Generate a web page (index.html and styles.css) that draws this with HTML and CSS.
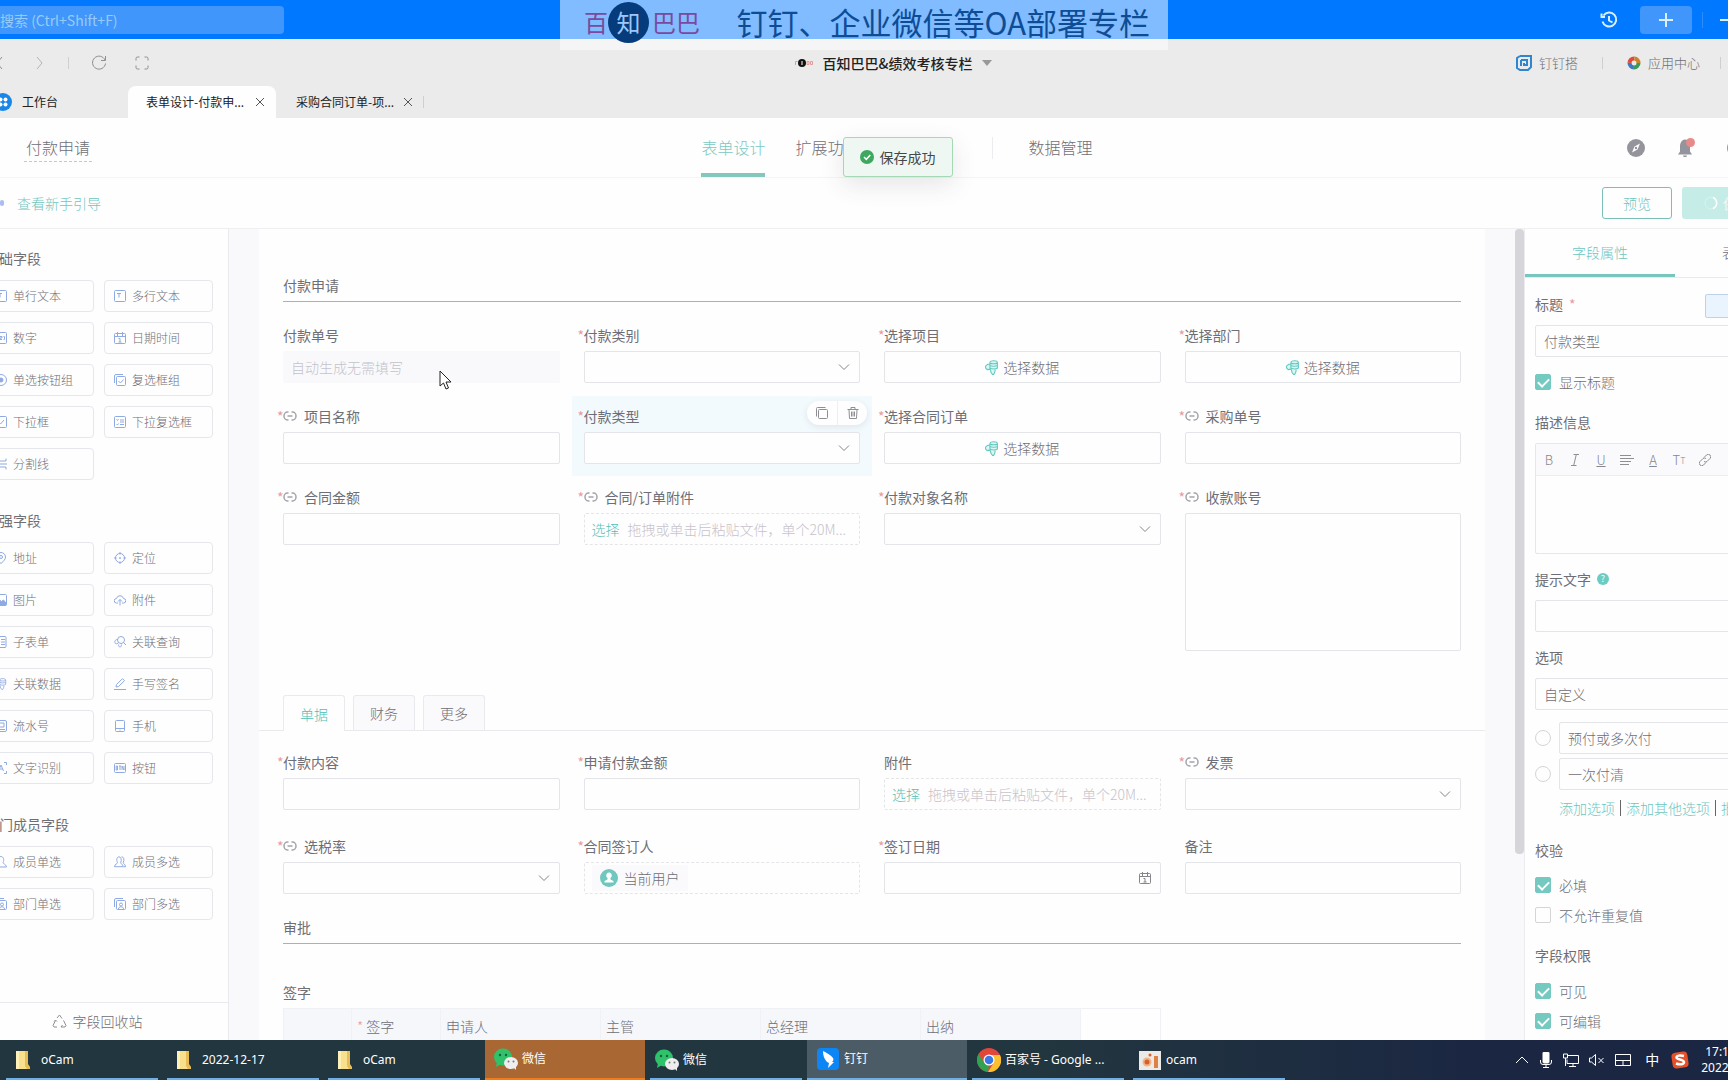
FILE: index.html
```html
<!DOCTYPE html>
<html lang="zh-CN">
<head>
<meta charset="utf-8">
<title>表单设计-付款申请</title>
<link rel="stylesheet" href="styles.css">
</head>
<body>
<svg class="sprite" aria-hidden="true">
  <symbol id="i-link" viewBox="0 0 14 12"><path d="M5.500 2H4.500a3.500 4 0 0 0 0 8h1M8.500 2h1a3.500 4 0 0 1 0 8h-1M4.500 6h5"/></symbol>
  <symbol id="i-down" viewBox="0 0 12 12"><path d="M1 3.500l5 5 5-5"/></symbol>
  <symbol id="i-text" viewBox="0 0 12 12"><rect x=".5" y=".5" width="11" height="11" rx="1"/><path d="M3 3.500h4M5 3.500v4"/></symbol>
  <symbol id="i-num" viewBox="0 0 12 12"><rect x=".5" y=".5" width="11" height="11" rx="1"/><path d="M3 4.500v3M5 4.500h2v1.500H5v1.500h2M8.500 4.500h1v3h-1"/></symbol>
  <symbol id="i-date" viewBox="0 0 12 12"><rect x=".5" y="1.500" width="11" height="10" rx="1"/><path d="M.5 4.500h11M3.500 0v4M8.500 0v4M4.500 6.500H6v3.500M4.500 10h3"/></symbol>
  <symbol id="i-radio" viewBox="0 0 12 12"><circle cx="6" cy="6" r="5.500"/><circle cx="6" cy="6" r="2" class="solid"/></symbol>
  <symbol id="i-checks" viewBox="0 0 12 12"><rect x="2.500" y="2.500" width="9" height="9" rx="1"/><path d="M.5 9V2A1.500 1.500 0 0 1 2 .5h7M4.500 7l2 2 3-3.500"/></symbol>
  <symbol id="i-check" viewBox="0 0 12 12"><rect x=".5" y=".5" width="11" height="11" rx="1"/><path d="M3 5.500l2.500 2.500L9 4"/></symbol>
  <symbol id="i-list" viewBox="0 0 12 12"><rect x=".5" y=".5" width="11" height="11" rx="1"/><path d="M2.500 3.500l1 1 1-1.500M2.500 8l1 1 1-1.500M6 4h4M6 6h4M6 8.500h4"/></symbol>
  <symbol id="i-split" viewBox="0 0 12 12"><path d="M0 6h2M3.500 6H12M2 .5V3h9V.5M2 11.500V9h9v2.500"/></symbol>
  <symbol id="i-pin" viewBox="0 0 12 12"><path d="M6 11.500C3 9 1.500 7 1.500 5a4.500 4.500 0 0 1 9 0c0 2-1.500 4-4.500 6.500z"/><circle cx="6" cy="5" r="1.500"/></symbol>
  <symbol id="i-aim" viewBox="0 0 12 12"><circle cx="6" cy="6" r="4.500"/><path d="M6 0v2.500M6 9.500V12M0 6h2.500M9.500 6H12"/><circle cx="6" cy="6" r=".5" class="solid"/></symbol>
  <symbol id="i-image" viewBox="0 0 12 12"><rect x=".5" y=".5" width="11" height="11" rx="1"/><path class="solid" d="M1 11V8.500l3-3 2.500 2 2-1.500L11 9v2z"/></symbol>
  <symbol id="i-cloud" viewBox="0 0 12 12"><path d="M4 9H2.500A2.200 2.200 0 0 1 2.500 4.500 3.600 3.600 0 0 1 9.500 4.500 2.200 2.200 0 0 1 9.500 9H8M6 11.500V5.500M4 7.500l2-2 2 2"/></symbol>
  <symbol id="i-sub" viewBox="0 0 12 12"><rect x="1.500" y=".5" width="9.500" height="11" rx="1"/><path d="M4.500.5v11M6 3.500h4M6 6h4M6 8.500h4"/></symbol>
  <symbol id="i-query" viewBox="0 0 12 12"><circle cx="7" cy="4" r="3.500"/><path d="M9.500 6.500L12 9M3.500 3.500C1 3.500 0 6 1.500 7.500c1 .8 2.500 0 3-1M4.500 8.500c0 1.500.5 2.500 1.500 2.500s1.500-1 1.500-2.500"/></symbol>
  <symbol id="i-data" viewBox="0 0 12 14"><path d="M4.500 2.500c0-2.400 7-2.400 7 0v5c-1.500 1.200-5.500 1.200-7 0zM4.500 5c1.500 1 5.500 1 7 0M4.500 2.800c1.500 1 5.500 1 7 0M4.500 4H2.500L.5 5.500v2l1.500 1.500 3-.5M5 9l.5 2.500L7 13.500h1l1-2L9.500 9"/></symbol>
  <symbol id="i-pen" viewBox="0 0 12 12"><path d="M0 11.500h12M2 9l.5-2.500L8.500.7l2 2L4.500 8.500z"/></symbol>
  <symbol id="i-serial" viewBox="0 0 12 12"><rect x=".5" y=".5" width="11" height="11" rx="1.500"/><path d="M4 3h5v4H4zM3 9.500h7"/></symbol>
  <symbol id="i-phone" viewBox="0 0 12 12"><rect x="1.500" y=".5" width="9" height="11" rx="1"/><path d="M1.500 8.500h9M5.500 10h1"/></symbol>
  <symbol id="i-ocr" viewBox="0 0 12 12"><path d="M.5 3V.5H3M9 .5h2.500V3M.5 9v2.500H3M9 11.500h2.500V9M3.500 9L6 3l2.500 6M4.500 7h3"/></symbol>
  <symbol id="i-btn" viewBox="0 0 12 12"><rect x=".5" y="1.500" width="11" height="9" rx="1"/><path d="M2.200 4v4h1.300V4zM5 4h2M6 4v4M8 8V4l2 4V4"/></symbol>
  <symbol id="i-user" viewBox="0 0 12 12"><path d="M4 6.500C2.500 4 3.500.5 6 .5s3.500 3.500 2 6c0 1.500 3 1.500 3.500 4.500H.5C1 8 4 8 4 6.500z"/></symbol>
  <symbol id="i-users" viewBox="0 0 12 12"><path d="M3.500 6.500C2 4 3 .8 5 .8s3 3.200 1.700 5.700c0 1.500 2 1.500 2.500 4.200H.3C.8 8 3.500 8 3.500 6.500zM7.500.8c2.500 0 3 3 1.700 5.700 0 1.500 2 1.500 2.500 4.200H9.500"/></symbol>
  <symbol id="i-dept" viewBox="0 0 12 12"><rect x="2.500" y="2.500" width="9" height="9" rx="1"/><path d="M.5 9V2A1.500 1.500 0 0 1 2 .5h7M4.500 11c0-3 5-3 5 0"/><circle cx="7" cy="6.500" r="1.500"/></symbol>
  <symbol id="i-folder" viewBox="0 0 14 20"><path fill="#f8e08c" d="M0 1h11v15l3 1v2H0z"/><path fill="#e9bd55" d="M9 1h3v13l2 3v2h-3L9 16z"/><path fill="#fdf0b8" d="M0 1h3v18H0z"/></symbol>
  <symbol id="i-wechat" viewBox="0 0 24 22"><ellipse cx="9" cy="9" rx="9" ry="8.500" fill="#2fc26a"/><path fill="#2fc26a" d="M3 14l-1 5 5-3z"/><circle cx="6" cy="7" r="1.200" fill="#17603a"/><circle cx="12" cy="7" r="1.200" fill="#17603a"/><ellipse cx="17" cy="15" rx="7" ry="6" fill="#eee"/><path fill="#eee" d="M19 19l3 3v-4z"/><circle cx="14.500" cy="13.500" r="1" fill="#777"/><circle cx="19.500" cy="13.500" r="1" fill="#777"/></symbol>
</svg>

<header class="topbar">
  <input class="search" type="text" aria-label="搜索" placeholder="搜索 (Ctrl+Shift+F)">
  <div class="top-actions">
    <button class="plain" aria-label="历史"><svg width="18" height="18" viewBox="0 0 18 18" class="ico-light"><path d="M3.500 4.500a7 7 0 1 1-1 6M1.500 2.500v3.500H5M9 5v4.500l3.500 2"/></svg></button>
    <button class="plus" aria-label="新建"><svg width="14" height="14" viewBox="0 0 14 14" class="ico-light"><path d="M7 0v14M0 7h14"/></svg></button>
    <i class="sep light"></i>
    <button class="plain" aria-label="最小化"><svg width="14" height="14" viewBox="0 0 14 14" class="ico-light"><path d="M0 7h14"/></svg></button>
  </div>
</header>
<div class="banner">
  <span class="brand">百</span><span class="brand-dot">知</span><span class="brand">巴巴</span>
  <span class="banner-title">钉钉、企业微信等OA部署专栏</span>
</div>

<div class="toolbar">
  <div class="nav-left">
    <button class="plain" aria-label="后退"><svg width="14" height="14" viewBox="0 0 14 14" class="ico-grey"><path d="M12 1L7 7l5 6"/></svg></button>
    <button class="plain" aria-label="前进"><svg width="14" height="14" viewBox="0 0 14 14" class="ico-dim"><path d="M5 1l5 6-5 6"/></svg></button>
    <i class="sep"></i>
    <button class="plain" aria-label="刷新"><svg width="16" height="16" viewBox="0 0 16 16" class="ico-grey"><path d="M14 5A6.500 6.500 0 1 0 14.500 8.500M14.500 1v4.500H10"/></svg></button>
    <button class="plain" aria-label="全屏"><svg width="14" height="14" viewBox="0 0 14 14" class="ico-grey"><path d="M1 4.500V2.500Q1 1 2.500 1h2M9.500 1h2Q13 1 13 2.500v2M13 9.500v2q0 1.500-1.500 1.500h-2M4.500 13h-2Q1 13 1 11.500v-2"/></svg></button>
  </div>
  <button class="org">
    <svg width="19" height="10" viewBox="0 0 19 10"><circle cx="8" cy="5" r="4" fill="#111"/><path d="M8 3v4" stroke="#fff"/><path d="M1.500 7V3.500h2M13 3.500h2v3h-2zM16.500 3.500h2v3h-2z" fill="none" stroke="#e39a9a"/></svg>
    <b>百知巴巴&amp;绩效考核专栏</b>
    <svg width="10" height="6" viewBox="0 0 10 6"><path d="M0 0h10L5 6z" fill="#999"/></svg>
  </button>
  <div class="nav-right">
    <a href="#"><svg width="16" height="16" viewBox="0 0 16 16" fill="none" stroke="#2f86cf" stroke-width="2"><path d="M4 1h11v11l-3 3H4l-3-2V3l3-2M5 5h6v5H8V8M5 5v6"/></svg>钉钉搭</a>
    <i class="sep"></i>
    <a href="#"><svg width="14" height="14" viewBox="0 0 14 14" fill="none" stroke-width="4"><circle cx="7" cy="7" r="4.500" stroke="#3b9a5b" stroke-dasharray="7 22"/><circle cx="7" cy="7" r="4.500" stroke="#3d78c9" stroke-dasharray="0 7 7 22"/><circle cx="7" cy="7" r="4.500" stroke="#d94f3d" stroke-dasharray="0 14 7 22"/><circle cx="7" cy="7" r="4.500" stroke="#c9852d" stroke-dasharray="0 21 8 22"/></svg>应用中心</a>
    <i class="sep"></i>
  </div>
</div>

<nav class="tabs">
  <a class="home" href="#"><svg width="18" height="18" viewBox="0 0 18 18"><circle cx="9" cy="9" r="9" fill="#1a86e8"/><g fill="#fff"><circle cx="6.500" cy="6.500" r="2"/><circle cx="11.500" cy="6.500" r="2"/><circle cx="6.500" cy="11.500" r="2"/><circle cx="11.500" cy="11.500" r="2"/></g></svg>工作台</a>
  <div class="tab active"><a href="#">表单设计-付款申...</a><button class="plain" aria-label="关闭"><svg width="10" height="10" viewBox="0 0 10 10" class="ico-dark"><path d="M1 1l8 8M9 1L1 9"/></svg></button></div>
  <div class="tab"><a href="#">采购合同订单-项...</a><button class="plain" aria-label="关闭"><svg width="10" height="10" viewBox="0 0 10 10" class="ico-dark"><path d="M1 1l8 8M9 1L1 9"/></svg></button></div>
  <i class="sep"></i>
</nav>

<div class="app">
  <header class="app-head">
    <h1>付款申请</h1>
    <nav class="steps">
      <a class="on" href="#">表单设计</a>
      <a href="#">扩展功能</a>
      <i class="sep"></i>
      <a href="#">数据管理</a>
    </nav>
    <div class="head-icons">
      <svg width="18" height="18" viewBox="0 0 18 18"><circle cx="9" cy="9" r="9" fill="#94949c"/><path fill="#fff" d="M13 4.500l-2.500 6-5.500 3 2.500-6z"/><circle cx="9" cy="9" r="1.200" fill="#94949c"/></svg>
      <svg width="18" height="20" viewBox="0 0 18 20"><path fill="#94949c" d="M8 1.500C4.500 2 3 5 3 8.500v5L1 16.500h14l-2-3v-5C13 5 11.500 2 8 1.500zM6 17.500h4c0 2-4 2-4 0z"/><circle cx="13.500" cy="4.500" r="4.500" fill="#e88a8a"/></svg>
      <svg width="18" height="18" viewBox="0 0 18 18"><circle cx="9" cy="9" r="9" fill="#94949c"/></svg>
    </div>
    <div class="toast" role="status"><svg width="14" height="14" viewBox="0 0 14 14"><circle cx="7" cy="7" r="7" fill="#3ea85f"/><path d="M4 7l2.300 2.300L10.300 5" fill="none" stroke="#fff" stroke-width="1.500"/></svg>保存成功</div>
  </header>

  <div class="sub-head">
    <a class="guide" href="#"><i></i>查看新手引导</a>
    <button class="preview">预览</button>
    <button class="save"><svg width="14" height="14" viewBox="0 0 14 14" fill="none"><circle cx="7" cy="7" r="6" stroke="#d8f3f0"/><path d="M9 1.500a6 6 0 0 1 0 11" stroke="#fff" stroke-width="1.500"/></svg>保存</button>
  </div>

  <div class="work">
    <aside class="palette">
      <div class="groups">
        <h2>基础字段</h2>
        <div class="grid2">
          <button><svg><use href="#i-text"/></svg>单行文本</button>
          <button><svg><use href="#i-text"/></svg>多行文本</button>
          <button><svg><use href="#i-num"/></svg>数字</button>
          <button><svg><use href="#i-date"/></svg>日期时间</button>
          <button><svg><use href="#i-radio"/></svg>单选按钮组</button>
          <button><svg><use href="#i-checks"/></svg>复选框组</button>
          <button><svg><use href="#i-check"/></svg>下拉框</button>
          <button><svg><use href="#i-list"/></svg>下拉复选框</button>
          <button><svg><use href="#i-split"/></svg>分割线</button>
        </div>
        <h2>增强字段</h2>
        <div class="grid2">
          <button><svg><use href="#i-pin"/></svg>地址</button>
          <button><svg><use href="#i-aim"/></svg>定位</button>
          <button><svg><use href="#i-image"/></svg>图片</button>
          <button><svg><use href="#i-cloud"/></svg>附件</button>
          <button><svg><use href="#i-sub"/></svg>子表单</button>
          <button><svg><use href="#i-query"/></svg>关联查询</button>
          <button><svg><use href="#i-data"/></svg>关联数据</button>
          <button><svg><use href="#i-pen"/></svg>手写签名</button>
          <button><svg><use href="#i-serial"/></svg>流水号</button>
          <button><svg><use href="#i-phone"/></svg>手机</button>
          <button><svg><use href="#i-ocr"/></svg>文字识别</button>
          <button><svg><use href="#i-btn"/></svg>按钮</button>
        </div>
        <h2>部门成员字段</h2>
        <div class="grid2">
          <button><svg><use href="#i-user"/></svg>成员单选</button>
          <button><svg><use href="#i-users"/></svg>成员多选</button>
          <button><svg><use href="#i-dept"/></svg>部门单选</button>
          <button><svg><use href="#i-dept"/></svg>部门多选</button>
        </div>
      </div>
      <button class="recycle"><svg width="15" height="14" viewBox="0 0 15 14" class="ico-grey"><path d="M5 4L7.500 1 10 4.500M3.500 6.500L1 11.500l1 1.500h3M11.500 6.500l2.500 5-1 1.500H9M10.500 11L9 13M2 7.500l1.500-1.500 1.500 1.500"/></svg>字段回收站</button>
    </aside>

    <main class="canvas">
      <div class="sheet">
        <h2 class="section">付款申请</h2>
        <div class="fields">
          <div class="field"><label for="f1">付款单号</label><input id="f1" class="off" placeholder="自动生成无需填写" disabled></div>
          <div class="field"><label for="f2"><em>*</em>付款类别</label><span class="drop"><select id="f2"><option></option></select><svg><use href="#i-down"/></svg></span></div>
          <div class="field"><span class="label"><em>*</em>选择项目</span><button class="pick"><svg><use href="#i-data"/></svg>选择数据</button></div>
          <div class="field"><span class="label"><em>*</em>选择部门</span><button class="pick"><svg><use href="#i-data"/></svg>选择数据</button></div>
          <div class="field"><label for="f3"><em>*</em><svg><use href="#i-link"/></svg>项目名称</label><input id="f3"></div>
          <div class="field chosen"><label for="f4"><em>*</em>付款类型</label><span class="drop"><select id="f4"><option></option></select><svg><use href="#i-down"/></svg></span>
            <div class="ops"><button aria-label="复制"><svg width="12" height="12" viewBox="0 0 12 12" class="ico-grey"><rect x="2.500" y="2.500" width="9" height="9" rx="1"/><path d="M.5 9.500V1.500q0-1 1-1h8"/></svg></button><button aria-label="删除"><svg width="12" height="12" viewBox="0 0 12 12" class="ico-grey"><path d="M.5 2.500h11M4 2.500v-2h4v2M2 2.500l.5 9h7l.5-9M4.500 4.500v5M6 4.500v5M7.500 4.500v5"/></svg></button></div>
          </div>
          <div class="field"><span class="label"><em>*</em>选择合同订单</span><button class="pick"><svg><use href="#i-data"/></svg>选择数据</button></div>
          <div class="field"><label for="f5"><em>*</em><svg><use href="#i-link"/></svg>采购单号</label><input id="f5"></div>
          <div class="field"><label for="f6"><em>*</em><svg><use href="#i-link"/></svg>合同金额</label><input id="f6"></div>
          <div class="field"><span class="label"><em>*</em><svg><use href="#i-link"/></svg>合同/订单附件</span><div class="upload"><a href="#">选择</a><span>拖拽或单击后粘贴文件，单个20M...</span></div></div>
          <div class="field"><label for="f7"><em>*</em>付款对象名称</label><span class="drop"><select id="f7"><option></option></select><svg><use href="#i-down"/></svg></span></div>
          <div class="field"><label for="f8"><em>*</em><svg><use href="#i-link"/></svg>收款账号</label><textarea id="f8"></textarea></div>
        </div>
        <div class="sheet-tabs"><button class="on">单据</button><button>财务</button><button>更多</button></div>
        <div class="fields second">
          <div class="field"><label for="g1"><em>*</em>付款内容</label><input id="g1"></div>
          <div class="field"><label for="g2"><em>*</em>申请付款金额</label><input id="g2"></div>
          <div class="field"><span class="label">附件</span><div class="upload"><a href="#">选择</a><span>拖拽或单击后粘贴文件，单个20M...</span></div></div>
          <div class="field"><label for="g3"><em>*</em><svg><use href="#i-link"/></svg>发票</label><span class="drop"><select id="g3"><option></option></select><svg><use href="#i-down"/></svg></span></div>
          <div class="field"><label for="g4"><em>*</em><svg><use href="#i-link"/></svg>选税率</label><span class="drop"><select id="g4"><option></option></select><svg><use href="#i-down"/></svg></span></div>
          <div class="field"><span class="label"><em>*</em>合同签订人</span><div class="upload"><span class="chip"><svg width="18" height="18" viewBox="0 0 18 18"><circle cx="9" cy="9" r="9" fill="#6fc7be"/><path fill="#fff" d="M9 3.500a3 3 0 0 1 1.500 5.500v1.500l3 1.500v1.500h-9V12l3-1.500V9A3 3 0 0 1 9 3.500z"/></svg>当前用户</span></div></div>
          <div class="field"><label for="g5"><em>*</em>签订日期</label><span class="drop"><input id="g5"><svg><use href="#i-date"/></svg></span></div>
          <div class="field"><label for="g6">备注</label><input id="g6"></div>
        </div>
        <h2 class="section approve">审批</h2>
        <h3>签字</h3>
        <table class="sign">
          <thead><tr><th class="c-idx"></th><th class="c-sign"><em>*</em> 签字</th><th class="c-role">申请人</th><th class="c-role">主管</th><th class="c-role">总经理</th><th class="c-role">出纳</th><th class="c-rest"></th></tr></thead>
          <tbody><tr><td></td><td></td><td></td><td></td><td></td><td></td><td></td></tr></tbody>
        </table>
      </div>
      <div class="thumb"></div>
    </main>

    <aside class="props">
      <div class="prop-tabs"><button class="on">字段属性</button><button>表单属性</button></div>
      <div class="prop-body">
        <div class="title-row"><label for="p1">标题<em>*</em></label><button class="linkage" aria-label="标题设置"></button></div>
        <input id="p1" value="付款类型">
        <label class="tick"><input type="checkbox" checked>显示标题</label>
        <h4 class="h-desc">描述信息</h4>
        <div class="editor">
          <div class="ed-bar">
            <button aria-label="加粗">B</button><button aria-label="斜体"><svg width="10" height="12" viewBox="0 0 10 12" class="ico-grey"><path d="M3.500 .5H9M1 11.500h5.500M6.300 .5L3.700 11.500"/></svg></button><button aria-label="下划线"><u>U</u></button>
            <button aria-label="对齐"><svg width="14" height="10" viewBox="0 0 14 10" class="ico-grey"><path d="M0 .5h11M0 3.500h14M0 6.500h11M0 9.500h9"/></svg></button>
            <button aria-label="颜色"><u>A</u></button><button aria-label="字号">T<small>T</small></button>
            <button aria-label="链接"><svg width="12" height="12" viewBox="0 0 12 12" class="ico-grey"><path d="M5 3.500L7.500 1a2.300 2.300 0 0 1 3.500 3.500L8 7.500q-1.500 1-3 0M7 8.500L4.500 11A2.300 2.300 0 0 1 1 7.500L4 4.500q1.500-1 3 0"/></svg></button>
            <button aria-label="清除">a</button>
          </div>
          <textarea aria-label="描述信息"></textarea>
        </div>
        <h4 class="h-tip"><label for="p2">提示文字</label><span class="help">?</span></h4>
        <input id="p2">
        <h4 class="h-opt"><label for="p3">选项</label></h4>
        <input id="p3" value="自定义">
        <div class="opts">
          <input type="radio" name="o" aria-label="预付或多次付"><input aria-label="选项一" value="预付或多次付">
          <input type="radio" name="o" aria-label="一次付清"><input aria-label="选项二" value="一次付清">
        </div>
        <div class="opt-links"><a href="#">添加选项</a><i></i><a href="#">添加其他选项</a><i></i><a href="#">批量编辑</a></div>
        <h4 class="h-check">校验</h4>
        <label class="tick"><input type="checkbox" checked>必填</label>
        <label class="tick"><input type="checkbox">不允许重复值</label>
        <h4 class="h-perm">字段权限</h4>
        <label class="tick"><input type="checkbox" checked>可见</label>
        <label class="tick"><input type="checkbox" checked>可编辑</label>
      </div>
    </aside>
  </div>
</div>

<footer class="taskbar">
  <button><svg class="fold"><use href="#i-folder"/></svg>oCam</button>
  <button><svg class="fold"><use href="#i-folder"/></svg>2022-12-17</button>
  <button><svg class="fold"><use href="#i-folder"/></svg>oCam</button>
  <button class="alert"><svg class="app-ico"><use href="#i-wechat"/></svg>微信</button>
  <button><svg class="app-ico"><use href="#i-wechat"/></svg>微信</button>
  <button class="cur"><svg class="app-ico" viewBox="0 0 24 24"><rect x="1" y="1" width="22" height="22" rx="4" fill="#0c86f5"/><path fill="#fff" d="M7 4c4 2 8 4 10 7 1 2 0 3-1 4h2l-6 6 1-5-2-1c-3-3-4-7-4-11z"/></svg>钉钉</button>
  <button><svg class="app-ico" viewBox="0 0 24 24"><circle cx="12" cy="12" r="12" fill="#e1463a"/><path fill="#2fa350" d="M1.600 6L7.500 15.500 12 17l-1 7A12 12 0 0 1 1.600 6z"/><path fill="#fbc02f" d="M12 7h11a12 12 0 0 1-12 17l5-8z"/><circle cx="12" cy="12" r="5.500" fill="#fff"/><circle cx="12" cy="12" r="4.300" fill="#3b78e7"/></svg>百家号 - Google ...</button>
  <button><svg class="app-ico" viewBox="0 0 24 24"><rect x="1" y="3" width="22" height="19" fill="#eceae6"/><circle cx="9" cy="14" r="4.500" fill="#f0b48a"/><circle cx="9" cy="14" r="2.500" fill="#d2622a"/><circle cx="12" cy="7" r="1.500" fill="#d2622a"/><path fill="#dd8146" d="M16 8h4v12h-4z"/></svg>ocam</button>
  <div class="tray">
    <svg width="14" height="14" viewBox="0 0 14 14"><path d="M1 10l6-6 6 6"/></svg>
    <svg width="14" height="16" viewBox="0 0 14 16"><rect x="4" y="0" width="6" height="11" rx="1" fill="#fff"/><path d="M1.500 8v2q0 2.500 2.500 2.500h6q2.500 0 2.500-2.500V8M7 13v2.500M4 15.500h6"/></svg>
    <svg width="16" height="14" viewBox="0 0 16 14"><path d="M5 2.500h10.500v8H4v-4M10 10.500v3M6 13.500h7M.5 1h4v4h-4zM2.500 5v8"/></svg>
    <svg width="16" height="14" viewBox="0 0 16 14"><path d="M.5 5h2l4-3.500v11L2.500 9h-2zM9.500 5l5 5M14.500 5l-5 5"/></svg>
    <svg width="16" height="14" viewBox="0 0 16 14"><path d="M.5 1.500h15v11H.5zM.5 7.500h15M8 7.500v5"/></svg>
    <span class="ime">中</span>
    <svg width="18" height="18" viewBox="0 0 18 18"><rect x="1" y="1" width="16" height="16" rx="4" fill="#e4502a" stroke="none" transform="rotate(-8 9 9)"/><path d="M13 5C9 4 5.500 4.500 5.500 6.500S13 8.500 13 11s-4 3-8 1.500" stroke-width="2.500"/></svg>
    <time><span>17:17</span><span>2022/12/17</span></time>
  </div>
</footer>

<svg class="pointer" width="13" height="20" viewBox="0 0 13 20"><path d="M1 1v15l3.500-3 2.500 6 2.500-1L7 12h5z" fill="#fff" stroke="#222"/></svg>
</body>
</html>
```
FILE: styles.css
```css
* { box-sizing: border-box; }

body {
  margin: 0;
  height: 100vh;
  display: flex;
  flex-direction: column;
  overflow: hidden;
  position: relative;
  background: #fefefe;
  color: #6e6e76;
  font: 300 14px/20px "Noto Sans CJK SC", sans-serif;
}

button, input, select, textarea { font: inherit; color: inherit; }
button { padding: 0; background: none; border: 0; white-space: nowrap; }
a { color: inherit; text-decoration: none; }
h1, h2, h3, h4 { margin: 0; font-weight: 400; font-size: 14px; }
em { font-style: normal; color: #e89a9f; }
svg { flex: none; }
.sprite { position: absolute; width: 0; height: 0; }
.solid { fill: currentColor; }

.ico-light { fill: none; stroke: #d8f0ff; stroke-width: 2; }
.ico-grey { fill: none; stroke: #8e8e94; }
.ico-dim { fill: none; stroke: #b4b4b8; }
.ico-dark { fill: none; stroke: #555; }
.plain { display: flex; align-items: center; justify-content: center; }
.sep { width: 1px; height: 12px; background: #cfcfcf; }

/* Window title bar */
.topbar {
  flex: none;
  height: 39px;
  display: flex;
  justify-content: space-between;
  align-items: center;
  background: #0078ff;
}
.search {
  width: 290px;
  height: 28px;
  margin-left: -6px;
  padding: 0 6px;
  border: 0;
  border-radius: 4px;
  background: #4196fb;
  font-weight: 400;
}
.search::placeholder { color: #96cbf8; }
.top-actions { display: flex; align-items: center; margin-right: -6px; }
.plus {
  width: 52px;
  height: 28px;
  margin: 0 10px 0 22px;
  border-radius: 4px;
  background: #4196fb;
  display: flex;
  align-items: center;
  justify-content: center;
}
.sep.light { height: 16px; margin-right: 17px; background: #2f8dfa; }

.banner {
  position: absolute;
  top: 0;
  left: 0;
  right: 0;
  width: 608px;
  height: 50px;
  margin: 0 auto;
  padding: 0 18px 6px 24px;
  display: flex;
  align-items: center;
  background: rgba(255, 255, 255, .5);
  color: #0f4c96;
  font-weight: 400;
}
.brand { font-size: 24px; line-height: 40px; color: #7b4a9e; }
.brand-dot {
  width: 41px;
  height: 41px;
  margin: 0 3px 0 0;
  border-radius: 50%;
  background: #063c7c;
  color: #9cc8ff;
  font-size: 24px;
  line-height: 40px;
  text-align: center;
}
.banner-title { margin-left: auto; font-size: 31px; line-height: 40px; white-space: nowrap; }

/* Browser toolbar and tabs */
.toolbar {
  flex: none;
  height: 47px;
  margin-right: -58px;
  display: grid;
  grid-template-columns: 1fr auto 1fr;
  align-items: center;
  background: #ebebeb;
}
.nav-left, .nav-right { display: flex; align-items: center; }
.nav-left { gap: 28px; margin-left: -10px; }
.nav-left .sep { margin: 0 -6px; }
.nav-right { justify-content: flex-end; gap: 24px; padding-right: 65px; font-size: 13px; }
.nav-right a { display: flex; align-items: center; gap: 7px; }
.nav-right .sep:last-child { margin-left: -4px; }
.org { display: flex; align-items: center; gap: 10px; color: #222; }
.org b { font-weight: 500; }

.tabs {
  flex: none;
  height: 32px;
  display: flex;
  align-items: center;
  background: #ebebeb;
  color: #222;
  font-size: 12px;
  font-weight: 400;
}
.home { display: flex; align-items: center; gap: 10px; width: 134px; margin-left: -6px; }
.tab {
  width: 148px;
  height: 32px;
  padding: 0 11px 0 18px;
  display: flex;
  align-items: center;
  justify-content: space-between;
  border-radius: 8px 8px 0 0;
}
.tab.active { background: #fefefe; }
.tab + .tab { padding-left: 20px; }
.tabs > .sep { margin-left: -1px; }

/* Form designer: the panels on both sides reach past the window */
.app {
  flex: 1;
  min-height: 0;
  margin: 0 -97px 0 -30px;
  display: flex;
  flex-direction: column;
}
.app-head {
  flex: none;
  position: relative;
  height: 60px;
  padding: 0 55px 0 54px;
  display: grid;
  grid-template-columns: 1fr auto 1fr;
  align-items: center;
  border-bottom: 1px solid #f4f4f6;
  font-size: 16px;
}
h1 {
  justify-self: start;
  padding: 2px;
  border-bottom: 1px dashed #c8c8cc;
  font-size: 16px;
  line-height: 24px;
  font-weight: 300;
}
.steps { height: 59px; display: flex; align-items: center; }
.steps a { line-height: 51px; border-bottom: 4px solid transparent; border-top: 4px solid transparent; }
.steps a + a { margin-left: 30px; }
.steps .on { color: #7cc8c2; border-bottom-color: #84c7c1; }
.steps .sep { height: 22px; margin: 0 36px 0 132px; background: #ececee; }
.head-icons { display: flex; justify-content: flex-end; align-items: center; gap: 32px; padding-right: 25px; }
.toast {
  position: absolute;
  top: 19px;
  left: 0;
  right: 0;
  width: 110px;
  height: 40px;
  margin: 0 auto;
  display: flex;
  align-items: center;
  justify-content: center;
  gap: 6px;
  border: 1px solid #a5d8b5;
  border-radius: 3px;
  background: #eef7f1;
  box-shadow: 0 8px 24px rgba(60, 60, 80, .12);
  color: #44484c;
  font-size: 14px;
  font-weight: 400;
}

.sub-head {
  flex: none;
  height: 51px;
  padding: 0 70px 0 31px;
  display: flex;
  align-items: center;
  gap: 10px;
  border-bottom: 1px solid #efeff2;
}
.guide { display: flex; align-items: center; gap: 13px; margin-right: auto; color: #6fc6c0; }
.guide i { width: 4px; height: 6px; margin-left: -1px; border-radius: 3px; background: #a9bdf0; }
.preview, .save {
  height: 32px;
  width: 70px;
  border: 1px solid #7cbfb9;
  border-radius: 3px;
  color: #6fc6c0;
}
.save {
  width: 73px;
  border: 0;
  padding-left: 22px;
  display: flex;
  align-items: center;
  gap: 5px;
  background: #c6ece8;
  color: #fff;
  overflow: hidden;
}

.work { flex: 1; min-height: 0; display: flex; }

/* Field palette */
.palette {
  width: 259px;
  flex: none;
  display: flex;
  flex-direction: column;
  border-right: 1px solid #e9eaee;
}
.groups { flex: 1; min-height: 0; overflow: hidden; padding: 9px 15px 0; }
.groups h2 { line-height: 40px; padding-bottom: 2px; }
.grid2 { display: grid; grid-template-columns: 1fr 1fr; gap: 10px; margin-bottom: 20px; }
.grid2 button {
  height: 32px;
  padding-left: 9px;
  display: flex;
  align-items: center;
  gap: 6px;
  border: 1px solid #e6e7ea;
  border-radius: 4px;
  font-size: 12px;
}
.grid2 svg { width: 12px; height: 12px; fill: none; stroke: #8faae2; color: #8faae2; }
.recycle {
  height: 38px;
  padding: 0 4px 2px 0;
  display: flex;
  align-items: center;
  justify-content: center;
  gap: 6px;
  border-top: 1px solid #e9eaee;
}

/* Canvas */
.canvas {
  flex: 1;
  min-width: 0;
  display: flex;
  justify-content: space-between;
  overflow: hidden;
  background: #f9f9fc;
}
.sheet { flex: 1; min-width: 0; margin: 0 30px; height: 900px; background: #fefefe; }
.thumb { width: 9px; height: 625px; border-radius: 4px; background: #d5d5da; }
.section {
  margin: 46px 24px 13px;
  padding-bottom: 6px;
  border-bottom: 1px solid #8abfc0;
}
.fields {
  display: grid;
  grid-template-columns: repeat(4, 1fr);
  row-gap: 1px;
  margin: 0 12px;
  align-items: start;
}
.fields.second { row-gap: 4px; margin-top: 11px; }
.field {
  position: relative;
  padding: 10px 12px 12px;
  display: flex;
  flex-direction: column;
  gap: 6px;
}
.field label, .label {
  height: 20px;
  display: flex;
  align-items: center;
  font-weight: 400;
}
.field em { width: 6px; margin-left: -6px; }
.field label svg, .label svg { width: 14px; height: 12px; margin-right: 7px; fill: none; stroke: #a4a4aa; stroke-width: 1.5; }
.field input, .field select, .pick, .upload, .field textarea {
  width: 100%;
  height: 32px;
  padding: 0 7px;
  border: 1px solid #e4e5e8;
  border-radius: 2px;
  background: #fefefe;
}
.field textarea { height: 138px; resize: none; display: block; }
.field .off { border-color: #f9f9fc; background: #f9f9fc; }
.off::placeholder { color: #c3c3cb; opacity: 1; }
.drop { position: relative; display: block; height: 32px; }
.drop select { appearance: none; }
.drop svg { position: absolute; right: 10px; top: 10px; width: 12px; height: 12px; fill: none; stroke: #85858b; }
.pick { display: flex; align-items: center; justify-content: center; gap: 5px; }
.pick svg { width: 13px; height: 15px; fill: #d9f7f3; stroke: #62c8be; }
.upload {
  display: flex;
  align-items: center;
  gap: 8px;
  border-style: dashed;
  color: #c8c3cb;
  white-space: nowrap;
  overflow: hidden;
}
.upload a { color: #55c0b6; }
.chip {
  display: flex;
  align-items: center;
  gap: 6px;
  padding: 3px 8px;
  background: #fafafd;
  color: #6e6e76;
}
.chosen { background: #f3fafd; }
.ops {
  position: absolute;
  top: 5px;
  right: 5px;
  height: 24px;
  display: flex;
  align-items: center;
  border-radius: 12px;
  background: #fefefe;
  box-shadow: 0 2px 6px rgba(80, 80, 120, .12);
}
.ops button { width: 30px; height: 24px; display: flex; align-items: center; justify-content: center; }
.ops button + button { border-left: 1px solid #f0f0f3; }

.sheet-tabs {
  margin-top: 32px;
  padding: 0 24px;
  height: 36px;
  display: flex;
  gap: 8px;
  border-bottom: 1px solid #e9eaed;
}
.sheet-tabs button {
  width: 62px;
  height: 35px;
  border: 1px solid #e9eaed;
  border-bottom: 0;
  border-radius: 3px 3px 0 0;
  background: #fafafd;
}
.sheet-tabs .on { height: 36px; background: #fefefe; color: #4fc0b6; }

.section.approve { margin: 11px 24px 38px; }
h3 { margin-left: 24px; }
.sign {
  table-layout: fixed;
  width: 878px;
  margin: 6px 24px 0;
  border-collapse: collapse;
}
.sign th, .sign td { height: 38px; padding: 0 6px 4px 5px; border: 1px solid #f0f1f5; font-weight: 300; text-align: left; }
.sign th { background: #f6f7fb; }
.sign .c-idx { width: 68px; }
.sign .c-sign { width: 89px; }
.sign .c-role { width: 160px; }
.sign .c-rest { background: #fefefe; }

/* Property panel */
.props { width: 301px; flex: none; border-left: 1px solid #ececf0; background: #fefefe; }
.prop-tabs { display: flex; height: 49px; border-bottom: 1px solid #e9eaed; }
.prop-tabs button { flex: 1; height: 48px; border-bottom: 3px solid transparent; }
.prop-tabs .on { color: #6fc6c0; border-bottom-color: #78c6be; }
.prop-body { padding: 16px 10px 0; }
.title-row { display: flex; justify-content: space-between; align-items: flex-start; height: 24px; margin-bottom: 7px; font-weight: 400; }
.title-row em { margin-left: 6px; }
.linkage { width: 110px; height: 24px; border: 1px solid #bcd2ea; border-radius: 2px; background: #eaf4fe; }
.prop-body input {
  display: block;
  width: 100%;
  height: 32px;
  padding: 0 8px;
  border: 1px solid #e4e5e8;
  border-radius: 2px;
  background: #fefefe;
}
.tick { display: flex; align-items: center; gap: 8px; height: 30px; }
.prop-body [type="checkbox"], .prop-body [type="radio"] {
  appearance: none;
  width: 16px;
  height: 16px;
  margin: 0;
  padding: 0;
  border: 1px solid #d4d5d9;
  border-radius: 2px;
}
.prop-body [type="radio"] { border-radius: 50%; }
.prop-body [type="checkbox"]:checked { background: #74c9c1; border-color: #74c9c1; }
.prop-body [type="checkbox"]:checked::after {
  content: "";
  display: block;
  width: 5px;
  height: 9px;
  margin: 1px 0 0 4px;
  border: solid #fff;
  border-width: 0 2px 2px 0;
  transform: rotate(45deg);
}
#p1 + .tick { margin-top: 10px; }
.h-desc { margin: 15px 0 11px; }
.editor { height: 111px; border: 1px solid #e6e7ea; border-radius: 2px; display: flex; flex-direction: column; }
.ed-bar { height: 32px; display: flex; align-items: center; border-bottom: 1px solid #ededf1; background: #fafafd; }
.ed-bar button { flex: none; width: 26px; height: 30px; display: flex; align-items: center; justify-content: center; color: #86868c; font-size: 13px; }
.ed-bar small { font-size: 9px; padding-top: 3px; }
.editor textarea { flex: 1; border: 0; resize: none; background: transparent; }
.h-tip { display: flex; align-items: center; gap: 6px; margin: 15px 0 11px; }
.help { width: 12px; height: 12px; border-radius: 50%; background: #6cccc2; color: #fff; font-size: 9px; line-height: 12px; text-align: center; }
.h-opt { margin: 15px 0 11px; }
.opts { display: grid; grid-template-columns: 16px 1fr; gap: 4px 8px; align-items: center; margin-top: 12px; }
.opt-links { display: flex; align-items: center; gap: 5px; margin: 8px 0 22px 24px; color: #6fc6c0; white-space: nowrap; }
.opt-links i { width: 1px; height: 16px; background: #666; }
.h-check { margin-bottom: 10px; }
.h-perm { margin: 15px 0 11px; }

/* Desktop taskbar */
.taskbar {
  flex: none;
  position: relative;
  height: 40px;
  padding-left: 2px;
  display: flex;
  gap: 1px;
  background: linear-gradient(90deg, #22363f 0%, #22363f 60%, #1b2742 85%);
  color: #fff;
  font: 400 12px/16px "Noto Sans", "Noto Sans CJK SC", sans-serif;
}
.taskbar button {
  width: 160px;
  padding-left: 9px;
  display: flex;
  align-items: center;
  gap: 4px;
  background: linear-gradient(#6fb0e6, #6fb0e6) center bottom / 152px 2px no-repeat;
}
.taskbar .alert { background: #a96833; border-bottom: 2px solid #ef7d1a; }
.taskbar .cur { background: #4c5c66; border-bottom: 2px solid #6fb0e6; }
.fold { width: 14px; height: 20px; margin: 0 7px 0 5px; }
.app-ico { width: 24px; height: 24px; }
.tray {
  margin-left: auto;
  margin-right: -37px;
  display: flex;
  align-items: center;
  gap: 10px;
}
.tray svg { fill: none; stroke: #fff; }
.ime { font-size: 14px; margin: 0 2px 0 4px; }
.tray time { display: flex; flex-direction: column; margin-left: 2px; }
.tray time span:first-child { padding-left: 4px; }

.pointer { position: absolute; left: 439px; top: 370px; }
```
